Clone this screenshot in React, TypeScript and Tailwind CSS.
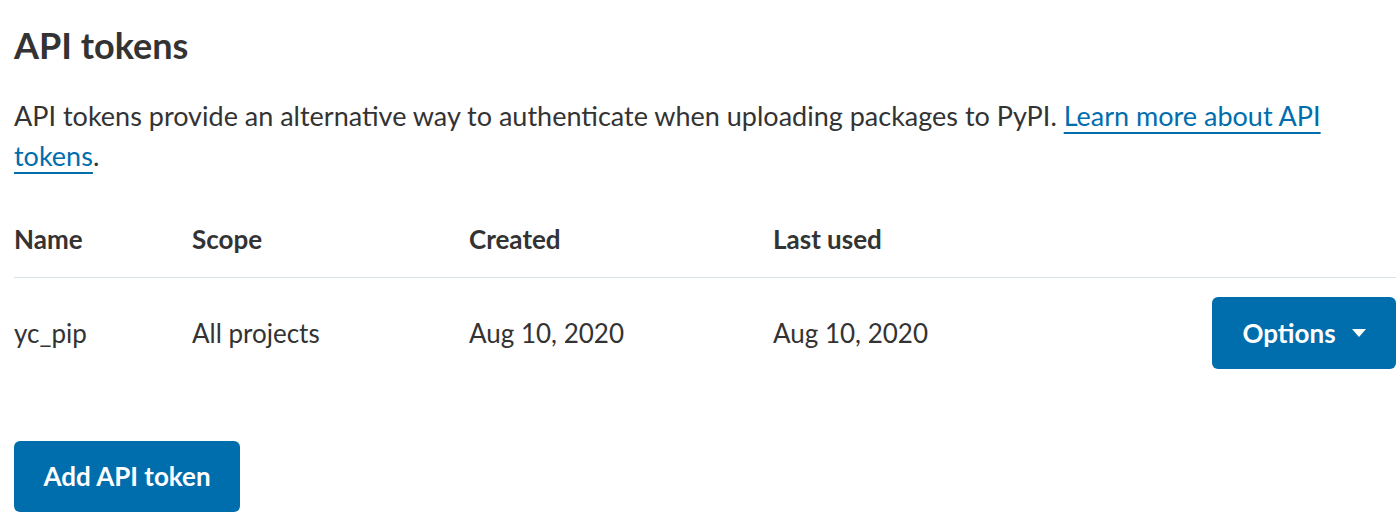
import React from "react";

const tokens = [
  { name: "yc_pip", scope: "All projects", created: "Aug 10, 2020", lastUsed: "Aug 10, 2020" },
];

const App = () => {
  return (
    <div className="min-h-screen bg-white pl-[14px] pr-[4px] text-[#333333] font-['Lato',sans-serif]">
      {/* Heading */}
      <h2 className="pt-[21px] text-[36px] font-bold leading-[48px]">API tokens</h2>

      <p className="mt-[27px] text-[27px] leading-[40px]">
        API tokens provide an alternative way to authenticate when uploading packages to PyPI.{" "}
        <a href="#" className="text-[#006dad] underline decoration-2 underline-offset-[6px]">
          Learn more about API tokens
        </a>
        .
      </p>

      {/* Tokens table */}
      <div className="mt-[43px]">
        <div className="grid grid-cols-[178px_277px_304px_1fr_auto] items-center pb-[18px] leading-[40px] border-b border-[#d6e4e8] text-[26px] font-bold">
          <span>Name</span>
          <span>Scope</span>
          <span>Created</span>
          <span>Last used</span>
          <span />
        </div>
        {tokens.map((t) => (
          <div
            key={t.name}
            className="grid grid-cols-[178px_277px_304px_1fr_auto] items-center pt-[19px] text-[26px]"
          >
            <span>{t.name}</span>
            <span>{t.scope}</span>
            <span>{t.created}</span>
            <span>{t.lastUsed}</span>
            <button className="flex items-center gap-[16px] h-[72px] w-[184px] justify-center rounded-[6px] bg-[#006dad] text-white font-bold">
              Options
              <svg width="14" height="8" viewBox="0 0 14 8" fill="currentColor">
                <path d="M0 0h14L7 8z" />
              </svg>
            </button>
          </div>
        ))}
      </div>

      <button className="mt-[72px] h-[71px] w-[226px] rounded-[6px] bg-[#006dad] text-white text-[26px] font-bold">
        Add API token
      </button>
    </div>
  );
};

export default App;
